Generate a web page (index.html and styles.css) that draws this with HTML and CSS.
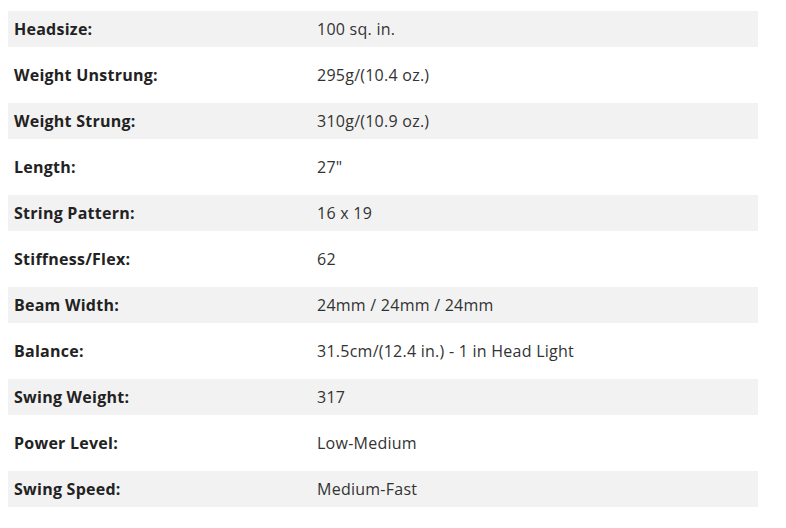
FILE: index.html
```html
<!DOCTYPE html>
<html>
<head>
<meta charset="utf-8">
<link rel="stylesheet" href="styles.css">
</head>
<body>
<div class="specs">
  <div class="row alt"><div class="label">Headsize:</div><div class="value">100 sq. in.</div></div>
  <div class="row"><div class="label">Weight Unstrung:</div><div class="value">295g/(10.4 oz.)</div></div>
  <div class="row alt"><div class="label">Weight Strung:</div><div class="value">310g/(10.9 oz.)</div></div>
  <div class="row"><div class="label">Length:</div><div class="value">27"</div></div>
  <div class="row alt"><div class="label">String Pattern:</div><div class="value">16 x 19</div></div>
  <div class="row"><div class="label">Stiffness/Flex:</div><div class="value">62</div></div>
  <div class="row alt"><div class="label">Beam Width:</div><div class="value">24mm / 24mm / 24mm</div></div>
  <div class="row"><div class="label">Balance:</div><div class="value">31.5cm/(12.4 in.) - 1 in Head Light</div></div>
  <div class="row alt"><div class="label">Swing Weight:</div><div class="value">317</div></div>
  <div class="row"><div class="label">Power Level:</div><div class="value">Low-Medium</div></div>
  <div class="row alt"><div class="label">Swing Speed:</div><div class="value">Medium-Fast</div></div>
</div>
</body>
</html>
```
FILE: styles.css
```css
html, body {
  margin: 0;
  padding: 0;
  background: #ffffff;
}
body {
  padding: 11px 28px 0 8px;
  font-family: "Open Sans", "Liberation Sans", sans-serif;
  font-size: 16px;
  letter-spacing: 0.25px;
}
.specs {
  display: flex;
  flex-direction: column;
  gap: 10px;
  width: 750px;
}
.row {
  display: grid;
  grid-template-columns: 303px 1fr;
  height: 36px;
  align-items: center;
}
.row.alt {
  background: #f2f2f2;
}
.label {
  padding-left: 6px;
  font-weight: 700;
  color: #222222;
  line-height: 20px;
  margin-top: -1px;
}
.value {
  padding-left: 6px;
  color: #333333;
  line-height: 20px;
  margin-top: -1px;
}
```
